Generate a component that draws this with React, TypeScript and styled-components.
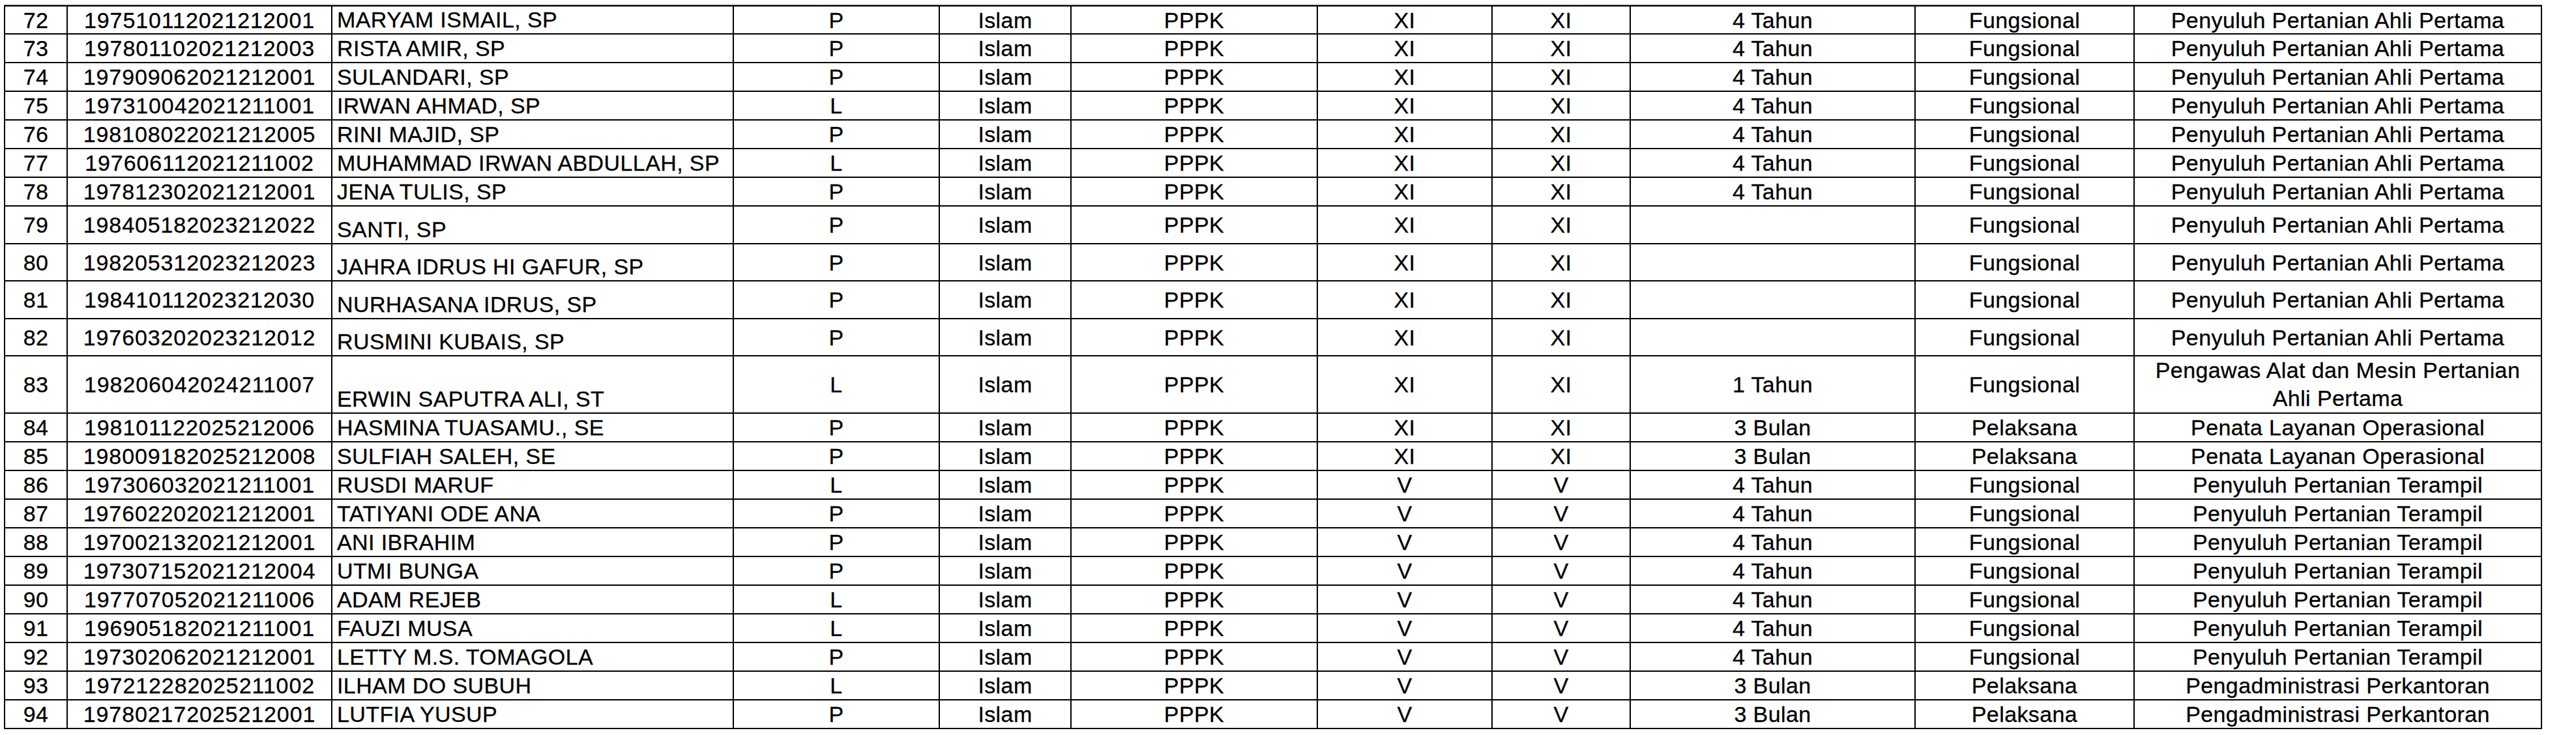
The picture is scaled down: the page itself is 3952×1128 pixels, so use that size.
import React from 'react';
import styled, { createGlobalStyle } from 'styled-components';

const GlobalStyle = createGlobalStyle`
  html, body {
    margin: 0;
    padding: 0;
    background: #ffffff;
  }
  body {
    font-family: "Liberation Sans", Arial, sans-serif;
    color: #000000;
  }
`;

// widths between the sheet's grid lines (each cell carries its right border)
const COLS = [96, 406, 616, 316, 202, 378, 268, 212, 437, 336, 625];
const TEMPLATE = COLS.map((w) => `${w}px`).join(' ');

const Page = styled.div`
  padding: 8px 0 0 6px;
`;

const Sheet = styled.div`
  display: inline-flex;
  flex-direction: column;
  border-top: 2px solid #000;
  border-left: 2px solid #000;
  box-shadow: 0 -1px 0 #8a8a8a;
  font-size: 34px;
  letter-spacing: 0.4px;
  -webkit-text-stroke: 0.3px #000;
`;

const Row = styled.div<{ $h: number }>`
  display: grid;
  grid-template-columns: ${TEMPLATE};
  height: ${(p) => p.$h}px;
  box-sizing: border-box;
  border-bottom: 2px solid #000;
`;

const Cell = styled.div<{ $align?: 'left' | 'center'; $valign?: 'middle' | 'bottom'; $spaced?: boolean }>`
  box-sizing: border-box;
  border-right: 2px solid #000;
  display: flex;
  flex-direction: column;
  justify-content: ${(p) => (p.$valign === 'bottom' ? 'flex-end' : 'center')};
  align-items: ${(p) => (p.$align === 'left' ? 'flex-start' : 'center')};
  padding: 0 ${(p) => (p.$align === 'left' ? '7px' : '4px')} ${(p) => (p.$valign === 'bottom' ? '2px' : '0')};
  text-align: ${(p) => p.$align || 'center'};
  line-height: 38px;
  white-space: nowrap;
  overflow: hidden;
  letter-spacing: ${(p) => (p.$spaced ? '0.9px' : 'inherit')};
`;

const Line = styled.span<{ $lh?: number }>`
  display: block;
  line-height: ${(p) => p.$lh || 38}px;
`;

type Person = {
  no: number;
  nip: string;
  name: string;
  sex: 'P' | 'L';
  gol: string;
  masa: string;
  jenis: string;
  jabatan: string[];
  h: number;
};

const PPAP = ['Penyuluh Pertanian Ahli Pertama'];
const PPT = ['Penyuluh Pertanian Terampil'];
const PLO = ['Penata Layanan Operasional'];
const PAP = ['Pengadministrasi Perkantoran'];

const rows: Person[] = [
  { no: 72, nip: '197510112021212001', name: 'MARYAM ISMAIL, SP', sex: 'P', gol: 'XI', masa: '4 Tahun', jenis: 'Fungsional', jabatan: PPAP, h: 43 },
  { no: 73, nip: '197801102021212003', name: 'RISTA AMIR, SP', sex: 'P', gol: 'XI', masa: '4 Tahun', jenis: 'Fungsional', jabatan: PPAP, h: 44 },
  { no: 74, nip: '197909062021212001', name: 'SULANDARI, SP', sex: 'P', gol: 'XI', masa: '4 Tahun', jenis: 'Fungsional', jabatan: PPAP, h: 44 },
  { no: 75, nip: '197310042021211001', name: 'IRWAN AHMAD, SP', sex: 'L', gol: 'XI', masa: '4 Tahun', jenis: 'Fungsional', jabatan: PPAP, h: 44 },
  { no: 76, nip: '198108022021212005', name: 'RINI MAJID, SP', sex: 'P', gol: 'XI', masa: '4 Tahun', jenis: 'Fungsional', jabatan: PPAP, h: 44 },
  { no: 77, nip: '197606112021211002', name: 'MUHAMMAD IRWAN ABDULLAH, SP', sex: 'L', gol: 'XI', masa: '4 Tahun', jenis: 'Fungsional', jabatan: PPAP, h: 44 },
  { no: 78, nip: '197812302021212001', name: 'JENA TULIS, SP', sex: 'P', gol: 'XI', masa: '4 Tahun', jenis: 'Fungsional', jabatan: PPAP, h: 44 },
  { no: 79, nip: '198405182023212022', name: 'SANTI, SP', sex: 'P', gol: 'XI', masa: '', jenis: 'Fungsional', jabatan: PPAP, h: 58 },
  { no: 80, nip: '198205312023212023', name: 'JAHRA IDRUS HI GAFUR, SP', sex: 'P', gol: 'XI', masa: '', jenis: 'Fungsional', jabatan: PPAP, h: 57 },
  { no: 81, nip: '198410112023212030', name: 'NURHASANA IDRUS, SP', sex: 'P', gol: 'XI', masa: '', jenis: 'Fungsional', jabatan: PPAP, h: 58 },
  { no: 82, nip: '197603202023212012', name: 'RUSMINI KUBAIS, SP', sex: 'P', gol: 'XI', masa: '', jenis: 'Fungsional', jabatan: PPAP, h: 57 },
  { no: 83, nip: '198206042024211007', name: 'ERWIN SAPUTRA ALI, ST', sex: 'L', gol: 'XI', masa: '1 Tahun', jenis: 'Fungsional', jabatan: ['Pengawas Alat dan Mesin Pertanian', 'Ahli Pertama'], h: 88 },
  { no: 84, nip: '198101122025212006', name: 'HASMINA TUASAMU., SE', sex: 'P', gol: 'XI', masa: '3 Bulan', jenis: 'Pelaksana', jabatan: PLO, h: 44 },
  { no: 85, nip: '198009182025212008', name: 'SULFIAH SALEH, SE', sex: 'P', gol: 'XI', masa: '3 Bulan', jenis: 'Pelaksana', jabatan: PLO, h: 44 },
  { no: 86, nip: '197306032021211001', name: 'RUSDI MARUF', sex: 'L', gol: 'V', masa: '4 Tahun', jenis: 'Fungsional', jabatan: PPT, h: 44 },
  { no: 87, nip: '197602202021212001', name: 'TATIYANI ODE ANA', sex: 'P', gol: 'V', masa: '4 Tahun', jenis: 'Fungsional', jabatan: PPT, h: 44 },
  { no: 88, nip: '197002132021212001', name: 'ANI IBRAHIM', sex: 'P', gol: 'V', masa: '4 Tahun', jenis: 'Fungsional', jabatan: PPT, h: 44 },
  { no: 89, nip: '197307152021212004', name: 'UTMI BUNGA', sex: 'P', gol: 'V', masa: '4 Tahun', jenis: 'Fungsional', jabatan: PPT, h: 44 },
  { no: 90, nip: '197707052021211006', name: 'ADAM REJEB', sex: 'L', gol: 'V', masa: '4 Tahun', jenis: 'Fungsional', jabatan: PPT, h: 44 },
  { no: 91, nip: '196905182021211001', name: 'FAUZI MUSA', sex: 'L', gol: 'V', masa: '4 Tahun', jenis: 'Fungsional', jabatan: PPT, h: 44 },
  { no: 92, nip: '197302062021212001', name: 'LETTY M.S. TOMAGOLA', sex: 'P', gol: 'V', masa: '4 Tahun', jenis: 'Fungsional', jabatan: PPT, h: 44 },
  { no: 93, nip: '197212282025211002', name: 'ILHAM DO SUBUH', sex: 'L', gol: 'V', masa: '3 Bulan', jenis: 'Pelaksana', jabatan: PAP, h: 44 },
  { no: 94, nip: '197802172025212001', name: 'LUTFIA YUSUP', sex: 'P', gol: 'V', masa: '3 Bulan', jenis: 'Pelaksana', jabatan: PAP, h: 44 },
];

function App() {
  return (
    <Page>
      <GlobalStyle />
      <Sheet>
        {rows.map((r) => (
          <Row key={r.no} $h={r.h}>
            <Cell>{r.no}</Cell>
            <Cell $spaced>{r.nip}</Cell>
            <Cell $align="left" $valign="bottom">{r.name}</Cell>
            <Cell>{r.sex}</Cell>
            <Cell>Islam</Cell>
            <Cell>PPPK</Cell>
            <Cell>{r.gol}</Cell>
            <Cell>{r.gol}</Cell>
            <Cell>{r.masa}</Cell>
            <Cell>{r.jenis}</Cell>
            <Cell>
              {r.jabatan.map((line) => (
                <Line key={line} $lh={r.jabatan.length > 1 ? 43 : 38}>
                  {line}
                </Line>
              ))}
            </Cell>
          </Row>
        ))}
      </Sheet>
    </Page>
  );
}

export default App;
